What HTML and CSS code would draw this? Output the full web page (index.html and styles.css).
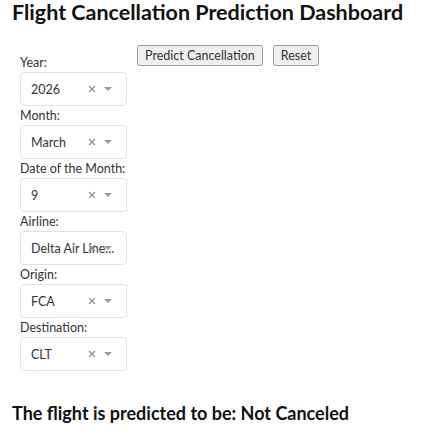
FILE: index.html
```html
<!DOCTYPE html>
<html>
<head>
<meta charset="utf-8">
<link rel="stylesheet" href="styles.css">
</head>
<body>
<h1 class="title">Flight Cancellation Prediction Dashboard</h1>
<div class="main">
  <div class="form">
    <div class="field">
      <label class="label">Year:</label>
      <div class="select"><span class="value">2026</span><svg class="clear" viewBox="0 0 8 8"><path d="M1 1L7 7M7 1L1 7"/></svg><span class="caret"></span></div>
    </div>
    <div class="field">
      <label class="label">Month:</label>
      <div class="select"><span class="value">March</span><svg class="clear" viewBox="0 0 8 8"><path d="M1 1L7 7M7 1L1 7"/></svg><span class="caret"></span></div>
    </div>
    <div class="field">
      <label class="label">Date of the Month:</label>
      <div class="select"><span class="value">9</span><svg class="clear" viewBox="0 0 8 8"><path d="M1 1L7 7M7 1L1 7"/></svg><span class="caret"></span></div>
    </div>
    <div class="field">
      <label class="label">Airline:</label>
      <div class="select"><span class="value">Delta Air Line...</span><svg class="clear" viewBox="0 0 8 8"><path d="M1 1L7 7M7 1L1 7"/></svg><span class="caret"></span></div>
    </div>
    <div class="field">
      <label class="label">Origin:</label>
      <div class="select"><span class="value">FCA</span><svg class="clear" viewBox="0 0 8 8"><path d="M1 1L7 7M7 1L1 7"/></svg><span class="caret"></span></div>
    </div>
    <div class="field">
      <label class="label">Destination:</label>
      <div class="select"><span class="value">CLT</span><svg class="clear" viewBox="0 0 8 8"><path d="M1 1L7 7M7 1L1 7"/></svg><span class="caret"></span></div>
    </div>
  </div>
  <div class="actions">
    <button class="btn">Predict Cancellation</button>
    <button class="btn">Reset</button>
  </div>
</div>
<h3 class="result">The flight is predicted to be: Not Canceled</h3>
</body>
</html>
```

FILE: styles.css
```css
html, body {
  margin: 0;
  background: #fff;
}
body {
  padding: 0 12px;
  font-family: Lato, "Open Sans", sans-serif;
  color: #111;
}
.title {
  margin: 0;
  font-size: 21.5px;
  line-height: 24px;
  font-weight: 700;
}
.main {
  display: flex;
  gap: 10px;
  margin-top: 21px;
  align-items: flex-start;
}
.form {
  width: 107px;
  margin-left: 8px;
  padding-top: 8px;
  display: flex;
  flex-direction: column;
}
.field {
  display: flex;
  flex-direction: column;
}
.label {
  font-size: 12.5px;
  line-height: 19px;
  color: #333;
}
.select {
  height: 34px;
  box-sizing: border-box;
  border: 1px solid #e3e3e3;
  border-radius: 4px;
  display: flex;
  align-items: center;
  padding: 0 14px 0 10px;
  font-size: 12.5px;
  color: #333;
}
.value {
  flex: 1;
  min-width: 0;
  white-space: nowrap;
}
.clear {
  width: 8px;
  height: 8px;
  margin-right: 8px;
  stroke: #8e8e8e;
  stroke-width: 1.2;
  fill: none;
  flex: none;
}
.caret {
  flex: none;
  width: 0;
  height: 0;
  border-left: 4px solid transparent;
  border-right: 4px solid transparent;
  border-top: 4px solid #999;
}
.actions {
  display: flex;
  gap: 10px;
}
.btn {
  font-family: Lato, "Open Sans", sans-serif;
  font-size: 12.5px;
  height: 21px;
  padding: 0 7px;
  background: #efefef;
  border: 1px solid #9a9a9a;
  border-radius: 2px;
  color: #333;
}
.result {
  margin: 29px 0 0;
  font-size: 18px;
  line-height: 26px;
  font-weight: 700;
}
```
